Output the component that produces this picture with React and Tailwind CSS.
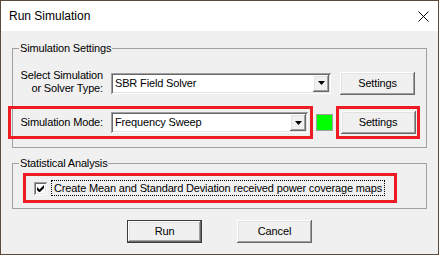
const raised = 'shadow-[inset_-1px_-1px_0_#696969,inset_1px_1px_0_#ffffff,inset_-2px_-2px_0_#a0a0a0,inset_2px_2px_0_#e3e3e3]'
const sunken = 'shadow-[inset_1px_1px_0_#a0a0a0,inset_-1px_-1px_0_#ffffff,inset_2px_2px_0_#696969,inset_-2px_-2px_0_#e3e3e3]'

function Combo({ value, width }) {
    return (
        <div className={`${width} h-[21px] bg-white ${sunken} flex items-center p-[2px]`}>
            <span className="flex-1 pl-[2px] truncate">{value}</span>
            <div className={`w-[16px] h-full bg-[#f0f0f0] ${raised} flex items-center justify-center`}>
                <svg width="7" height="4" viewBox="0 0 7 4">
                    <path d="M0 0h7L3.5 4z" fill="#000" />
                </svg>
            </div>
        </div>
    )
}

function Button({ children, isDefault }) {
    return (
        <button
            className={`w-[75px] h-[23px] bg-[#f0f0f0] ${raised} ${isDefault ? 'border border-[#3c3c3c]' : ''} flex items-center justify-center`}
        >
            {children}
        </button>
    )
}

export default function App() {
    return (
        <div className="w-[439px] h-[255px] border border-[#5d4a3a] bg-[#f0f0f0] flex flex-col font-['Liberation_Sans',Arial,sans-serif] text-[11px] tracking-[-0.15px] text-black whitespace-nowrap">
            <div className="h-[30px] bg-white flex items-center justify-between pl-[8px] pr-[9px] text-[12px] tracking-normal">
                <span>Run Simulation</span>
                <svg width="11" height="11" viewBox="0 0 11 11">
                    <path d="M0.5 0.5l10 10M10.5 0.5l-10 10" stroke="#000" strokeWidth="1" />
                </svg>
            </div>
            <div className="flex-1 px-[11px] pt-[9px]">
                <fieldset className="border border-[#a0a0a0] pb-[8px]">
                    <legend className="ml-[6px] px-[1px] leading-[16px]">Simulation Settings</legend>
                    <div className="mt-[16px] h-[22px] flex items-center">
                        <div className="w-[90px] text-right leading-[13px] -mt-[2px]">
                            Select Simulation
                            <br />
                            or Solver Type:
                        </div>
                        <div className="ml-[8px]">
                            <Combo value="SBR Field Solver" width="w-[220px]" />
                        </div>
                        <div className="ml-[9px]">
                            <Button>Settings</Button>
                        </div>
                    </div>
                    <div className="mt-[12px] flex items-center">
                        <div className="-ml-[5px] w-[305px] h-[33px] border-[3px] border-[#ed1c24] flex items-center">
                            <div className="w-[92px] text-right">Simulation Mode:</div>
                            <div className="ml-[8px]">
                                <Combo value="Frequency Sweep" width="w-[197px]" />
                            </div>
                        </div>
                        <div className="ml-[3px] w-[17px] h-[17px] border border-[#a0a0a0] bg-[#00ff00]" />
                        <div className="ml-[3px] w-[84px] h-[33px] border-[3px] border-[#ed1c24] flex items-center justify-center">
                            <Button>Settings</Button>
                        </div>
                    </div>
                </fieldset>
                <fieldset className="mt-[7px] border border-[#a0a0a0] pb-[5px]">
                    <legend className="ml-[6px] px-[1px] leading-[16px]">Statistical Analysis</legend>
                    <div className="mt-[2px] ml-[10px] w-[374px] h-[30px] border-[3px] border-[#ed1c24] flex items-center pl-[8px]">
                        <div className={`w-[13px] h-[13px] bg-white ${sunken} flex items-center justify-center`}>
                            <svg width="7" height="7" viewBox="0 0 7 7">
                                <path d="M0 2v3l2 2h1l4-4V0L2.5 4.5z" fill="#000" />
                            </svg>
                        </div>
                        <div className="ml-[4px] border border-dotted border-black px-[2px] leading-[14px]">
                            Create Mean and Standard Deviation received power coverage maps
                        </div>
                    </div>
                </fieldset>
                <div className="mt-[11px] flex justify-center gap-[35px]">
                    <Button isDefault>Run</Button>
                    <Button>Cancel</Button>
                </div>
            </div>
        </div>
    )
}
